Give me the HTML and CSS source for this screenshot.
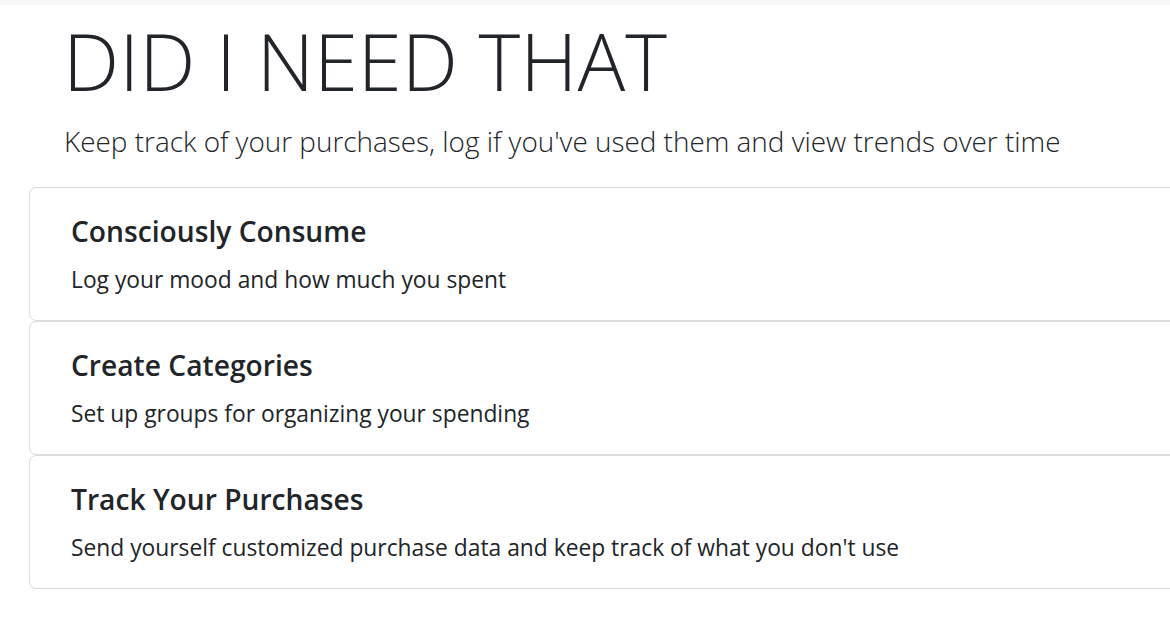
FILE: index.html
```html
<!DOCTYPE html>
<html lang="en">
<head>
<meta charset="utf-8">
<title>Did I Need That</title>
<link rel="stylesheet" href="styles.css">
</head>
<body>
<div class="topbar"></div>
<header class="hero">
  <h1 class="display">DID I NEED THAT</h1>
  <p class="lead">Keep track of your purchases, log if you've used them and view trends over time</p>
</header>
<main class="cards">
  <section class="card">
    <h5 class="card-title">Consciously Consume</h5>
    <p class="card-text">Log your mood and how much you spent</p>
  </section>
  <section class="card">
    <h5 class="card-title">Create Categories</h5>
    <p class="card-text">Set up groups for organizing your spending</p>
  </section>
  <section class="card">
    <h5 class="card-title">Track Your Purchases</h5>
    <p class="card-text">Send yourself customized purchase data and keep track of what you don't use</p>
  </section>
</main>
</body>
</html>
```

FILE: styles.css
```css
html, body {
  margin: 0;
  padding: 0;
  background: #fff;
  overflow: hidden;
}
body {
  font-family: "Open Sans", "Noto Sans", sans-serif;
  color: #212529;
  width: 1170px;
  height: 623px;
}
.topbar {
  height: 5px;
  background: #f6f7f9;
}
.hero {
  padding: 0 0 0 64px;
}
.display {
  margin: 0 0 0 -1px;
  font-size: 79.5px;
  font-weight: 300;
  line-height: 110px;
  letter-spacing: 0;
}
.lead {
  margin: 0;
  font-size: 27.9px;
  font-weight: 300;
  line-height: 52px;
  color: #212529;
  padding-bottom: 20px;
}
.cards {
  margin-left: 29px;
  width: 1200px;
  display: flex;
  flex-direction: column;
}
.card {
  box-sizing: border-box;
  height: 134px;
  border: 1px solid #dcdcdc;
  border-radius: 7px;
  padding: 23px 41px 0;
}
.card-title {
  margin: 0;
  font-size: 28.2px;
  font-weight: 600;
  line-height: 40px;
}
.card-text {
  margin: 12px 0 0;
  font-size: 22.8px;
  line-height: 34px;
}
```
